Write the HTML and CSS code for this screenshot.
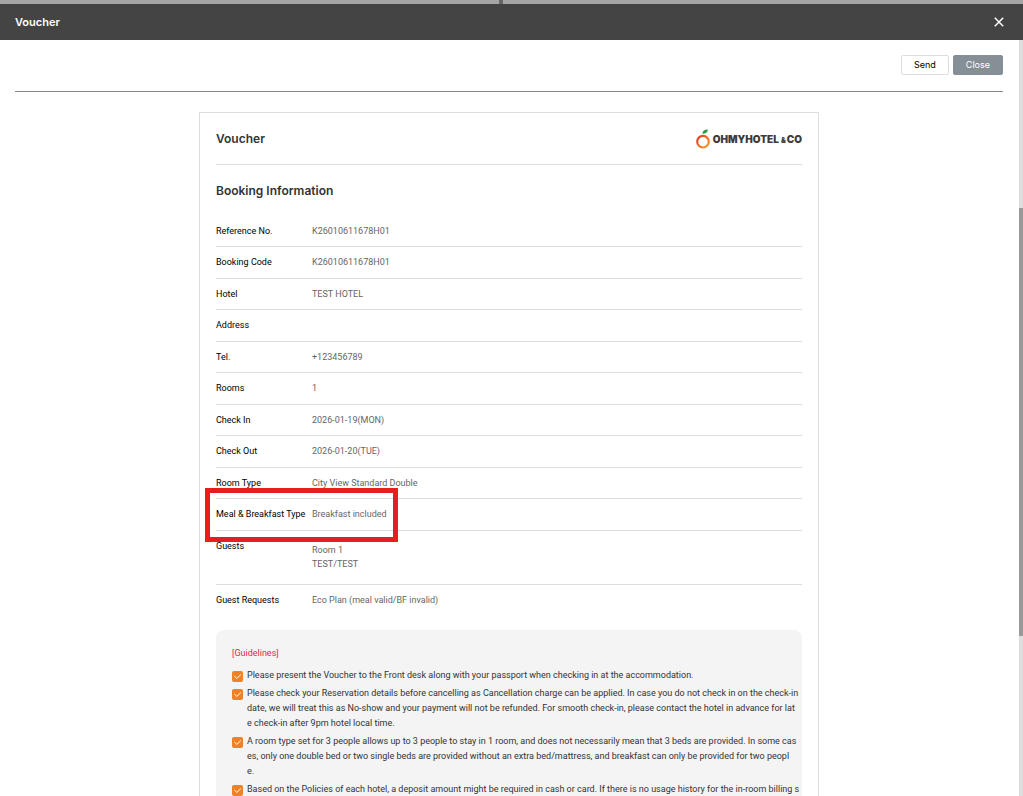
FILE: index.html
```
<!DOCTYPE html>
<html lang="en">
<head>
    <meta charset="UTF-8">
    <meta name="viewport" content="width=device-width, initial-scale=1.0">
    <title>Voucher</title>
    <link rel="stylesheet" href="styles.css">
</head>
<body>
    <svg class="defs" width="0" height="0" aria-hidden="true">
        <symbol id="tick" viewBox="0 0 11 11">
            <rect width="11" height="11" rx="2" fill="#f08127"/>
            <path d="M2.6 5.3 4.8 7.4 8.6 3.8" fill="none" stroke="#fff" stroke-width="1" stroke-linecap="round"/>
        </symbol>
    </svg>
    <div class="backdrop"></div>
    <header class="popup-header">
        <h1>Voucher</h1>
        <button type="button" class="icon-close" aria-label="Close popup">
            <svg width="10" height="10" viewBox="0 0 10 10"><path d="M.8.8 9.2 9.2M9.2.8.8 9.2" stroke="#fff" stroke-width="1.5"/></svg>
        </button>
    </header>
    <div class="popup-body">
        <main>
            <div class="actions">
                <button type="button" class="btn">Send</button>
                <button type="button" class="btn btn-gray">Close</button>
            </div>
            <section class="voucher">
                <div class="voucher-top">
                    <h2>Voucher</h2>
                    <div class="logo">
                        <svg width="15" height="20" viewBox="0 0 15 20" aria-hidden="true">
                            <defs>
                                <linearGradient id="orange" x1="0" y1="0" x2="1" y2="1">
                                    <stop offset="0" stop-color="#e5392f"/>
                                    <stop offset="1" stop-color="#f3a022"/>
                                </linearGradient>
                            </defs>
                            <circle cx="7" cy="12.7" r="5.8" fill="none" stroke="url(#orange)" stroke-width="2.2"/>
                            <path d="M6.3 4.8C6.4 1.8 8.6.3 12 .4 11.7 3.2 9.6 4.9 6.3 4.8Z" fill="#2d9b4b"/>
                        </svg>
                        <span>OHMYHOTEL<small>&amp;</small>CO</span>
                    </div>
                </div>
                <h3>Booking Information</h3>
                <table class="info">
                    <tr><th scope="row">Reference No.</th><td>K26010611678H01</td></tr>
                    <tr><th scope="row">Booking Code</th><td>K26010611678H01</td></tr>
                    <tr><th scope="row">Hotel</th><td>TEST HOTEL</td></tr>
                    <tr><th scope="row">Address</th><td></td></tr>
                    <tr><th scope="row">Tel.</th><td>+123456789</td></tr>
                    <tr><th scope="row">Rooms</th><td>1</td></tr>
                    <tr><th scope="row">Check In</th><td>2026-01-19(MON)</td></tr>
                    <tr><th scope="row">Check Out</th><td>2026-01-20(TUE)</td></tr>
                    <tr><th scope="row">Room Type</th><td>City View Standard Double</td></tr>
                    <tr class="marked"><th scope="row">Meal &amp; Breakfast Type</th><td>Breakfast included</td></tr>
                    <tr class="guests"><th scope="row">Guests</th><td>Room 1<br>TEST/TEST</td></tr>
                    <tr><th scope="row">Guest Requests</th><td>Eco Plan (meal valid/BF invalid)</td></tr>
                </table>
                <div class="guidelines">
                    <h4>[Guidelines]</h4>
                    <ul>
                        <li><svg class="tick"><use href="#tick"/></svg><p>Please present the Voucher to the Front desk along with your passport when checking in at the accommodation.</p></li>
                        <li><svg class="tick"><use href="#tick"/></svg><p>Please check your Reservation details before cancelling as Cancellation charge can be applied. In case you do not check in on the check-in<br>date, we will treat this as No-show and your payment will not be refunded. For smooth check-in, please contact the hotel in advance for lat<br>e check-in after 9pm hotel local time.</p></li>
                        <li><svg class="tick"><use href="#tick"/></svg><p>A room type set for 3 people allows up to 3 people to stay in 1 room, and does not necessarily mean that 3 beds are provided. In some cas<br>es, only one double bed or two single beds are provided without an extra bed/mattress, and breakfast can only be provided for two peopl<br>e.</p></li>
                        <li><svg class="tick"><use href="#tick"/></svg><p>Based on the Policies of each hotel, a deposit amount might be required in cash or card. If there is no usage history for the in-room billing s</p></li>
                    </ul>
                </div>
            </section>
        </main>
        <div class="scrollbar"><div class="thumb"></div></div>
    </div>
</body>
</html>
```
FILE: styles.css
```
*,
*::after {
    box-sizing: border-box;
}

body {
    margin: 0;
    height: 100vh;
    display: flex;
    flex-direction: column;
    overflow: hidden;
    font-family: Inter, "Liberation Sans", sans-serif;
    font-size: 9px;
    line-height: 14px;
    color: #000;
    background-color: #fff;
}

h1, h2, h3, h4, p, ul {
    margin: 0;
    padding: 0;
}

.defs {
    position: absolute;
}

/* Page behind the popup */
.backdrop {
    flex: none;
    height: 4px;
    background: linear-gradient(#666, #666) 499px 0 / 4px 4px no-repeat #a5a5a5;
}

/* Popup header */
.popup-header {
    flex: none;
    height: 36px;
    padding: 0 19px 0 15px;
    display: flex;
    align-items: center;
    justify-content: space-between;
    background-color: #444;
    color: #fff;
}

.popup-header h1 {
    font-size: 11px;
    font-weight: 600;
}

.icon-close {
    display: flex;
    padding: 0;
    border: 0;
    background: none;
}

.popup-body {
    flex: 1;
    min-height: 0;
    display: flex;
}

main {
    flex: 1;
    padding: 0 16px 0 15px;
    overflow: hidden;
}

.actions {
    display: flex;
    justify-content: flex-end;
    gap: 4px;
    padding: 15px 0 16px;
    border-bottom: 1px solid #888;
}

.btn {
    height: 20px;
    padding: 0 12px;
    border: 1px solid #ddd;
    border-radius: 2px;
    background-color: #fff;
    font-family: inherit;
    font-size: 9px;
    line-height: 16px;
}

.btn-gray {
    border-color: #868e96;
    background-color: #868e96;
    color: #fff;
}

/* Voucher sheet */
.voucher {
    width: 620px;
    margin: 20px auto 0;
    padding: 0 16px;
    border: 1px solid #ddd;
}

.voucher-top {
    height: 52px;
    display: flex;
    align-items: center;
    justify-content: space-between;
    border-bottom: 1px solid #ddd;
}

h2, h3 {
    font-size: 12px;
    font-weight: 600;
    color: #333;
}

h3 {
    margin: 19px 0 18px;
}

.logo {
    display: flex;
    align-items: flex-end;
    gap: 2px;
    color: #3d3a39;
    font-size: 10px;
    font-weight: 900;
    line-height: 16px;
}

.logo small {
    padding: 0 1px 0 2px;
    font-size: 7px;
}

.info,
.guidelines {
    font-family: Roboto, "Liberation Sans", sans-serif;
}

.info {
    width: 100%;
    border-collapse: separate;
    border-spacing: 0;
}

.info th,
.info td {
    height: 31px;
    padding: 8px 0;
    border-bottom: 1px solid #ddd;
    text-align: left;
    vertical-align: top;
}

.info tr:nth-child(even) > * {
    height: 32px;
}

.info th {
    width: 96px;
    font-weight: 400;
    white-space: nowrap;
}

.info td {
    color: #666;
}

.info .guests td {
    padding: 12px 0 13px;
}

.info tr:last-child > * {
    border-bottom: 0;
}

/* Red frame round the meal row */
.marked {
    position: relative;
}

.marked::after {
    content: "";
    position: absolute;
    top: -11px;
    left: -11px;
    width: 193px;
    height: 54px;
    border: 5px solid #e81e1e;
}

/* Guidelines */
.guidelines {
    margin-top: 13px;
    padding: 16px;
    border-radius: 8px;
    background-color: #f4f4f4;
}

.guidelines h4 {
    margin-bottom: 8px;
    font-size: 9px;
    font-weight: 400;
    color: #f01d3c;
}

.guidelines ul {
    list-style: none;
}

.guidelines li {
    display: flex;
    gap: 4px;
    margin-bottom: 3px;
    line-height: 15px;
    color: #333;
    white-space: nowrap;
}

.tick {
    flex: none;
    width: 11px;
    height: 11px;
    margin-top: 3px;
}

/* Scrollbar */
.scrollbar {
    position: relative;
    width: 4px;
    background-color: #ddd;
}

.thumb {
    position: absolute;
    top: 168px;
    width: 100%;
    height: 428px;
    background-color: #999;
}
```
